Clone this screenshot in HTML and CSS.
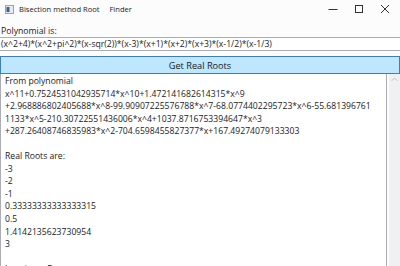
FILE: index.html
```html
<!DOCTYPE html>
<html lang="en">

<head>
    <meta charset="UTF-8">
    <title>Bisection method Root Finder</title>
    <link rel="stylesheet" href="styles.css">
</head>

<body>
    <div class="ventana">
        <div class="barra-titulo">
            <svg class="icono-app" width="9" height="9" viewBox="0 0 9 9">
                <rect x="0.5" y="0.5" width="8" height="8" fill="#e8ecf2" stroke="#9aa4b4"/>
                <rect x="1.5" y="2" width="3" height="5" fill="#3a5f94"/>
            </svg>
            <span class="titulo">Bisection method Root     Finder</span>
            <div class="controles">
                <svg width="10" height="10" viewBox="0 0 10 10"><path d="M0.5 5.5h9" stroke="#333" stroke-width="1"/></svg>
                <svg width="10" height="10" viewBox="0 0 10 10"><rect x="1.5" y="1.5" width="7" height="7" fill="none" stroke="#333" stroke-width="1"/></svg>
                <svg width="10" height="10" viewBox="0 0 10 10"><path d="M1 1L9 9M9 1L1 9" stroke="#333" stroke-width="1"/></svg>
            </div>
        </div>

        <div class="etiqueta">Polynomial is:</div>
        <div class="entrada">(x^2+4)*(x^2+pi^2)*(x-sqr(2))*(x-3)*(x+1)*(x+2)*(x+3)*(x-1/2)*(x-1/3)</div>

        <button class="btn-raices">Get Real Roots</button>

        <div class="resultado">
            <div class="texto-resultado">From polynomial
x^11+0.7524531042935714*x^10+1.472141682614315*x^9
+2.968886802405688*x^8-99.90907225576788*x^7-68.0774402295723*x^6-55.681396761
1133*x^5-210.30722551436006*x^4+1037.8716753394647*x^3
+287.26408746835983*x^2-704.6598455827377*x+167.49274079133303

Real Roots are:
-3
-2
-1
0.33333333333333315
0.5
1.4142135623730954
3

Imaginary Roots are:</div>
            <div class="scroll">
                <svg width="7" height="5" viewBox="0 0 7 5"><path d="M0.5 4L3.5 1L6.5 4" fill="none" stroke="#c2c2c2" stroke-width="1"/></svg>
            </div>
        </div>
    </div>
</body>

</html>
```

FILE: styles.css
```css
body {
    margin: 0;
    font-family: "Open Sans", "Noto Sans", sans-serif;
    color: #1a1a1a;
    background-color: #fcfcfc;
    overflow: hidden;
}

.ventana {
    width: 400px;
    height: 266px;
    display: flex;
    flex-direction: column;
    overflow: hidden;
}

.barra-titulo {
    height: 18px;
    display: flex;
    align-items: center;
    padding-left: 5px;
    flex-shrink: 0;
}

.icono-app {
    margin-right: 5px;
}

.titulo {
    font-size: 7.6px;
    white-space: pre;
    color: #222;
}

.controles {
    margin-left: auto;
    display: flex;
    gap: 16px;
    padding-right: 10px;
}

.etiqueta {
    margin-top: 8px;
    padding-left: 1px;
    font-size: 8.7px;
    line-height: 11px;
}

.entrada {
    border-top: 1px solid #abadb3;
    border-bottom: 1px solid #abadb3;
    height: 12px;
    line-height: 12px;
    padding-left: 1px;
    font-size: 8.65px;
    white-space: nowrap;
    background-color: #fff;
}

.btn-raices {
    margin-top: 5px;
    height: 18px;
    width: 400px;
    background-color: #bee6fd;
    border: 1px solid #3c7fb1;
    font-family: inherit;
    font-size: 9.2px;
    color: #1a1a1a;
    padding: 0;
    flex-shrink: 0;
}

.resultado {
    display: flex;
    flex: 1;
    min-height: 0;
}

.texto-resultado {
    width: 387px;
    border-left: 1px solid #abadb3;
    border-right: 1px solid #abadb3;
    background-color: #fff;
    padding: 1px 0 0 4px;
    box-sizing: border-box;
    font-size: 8.65px;
    line-height: 12.54px;
    white-space: pre;
    overflow: hidden;
}

.scroll {
    width: 11px;
    margin-left: 2px;
    background-color: #f0f0f0;
    display: flex;
    justify-content: center;
    padding-top: 3px;
    align-items: flex-start;
}
```
